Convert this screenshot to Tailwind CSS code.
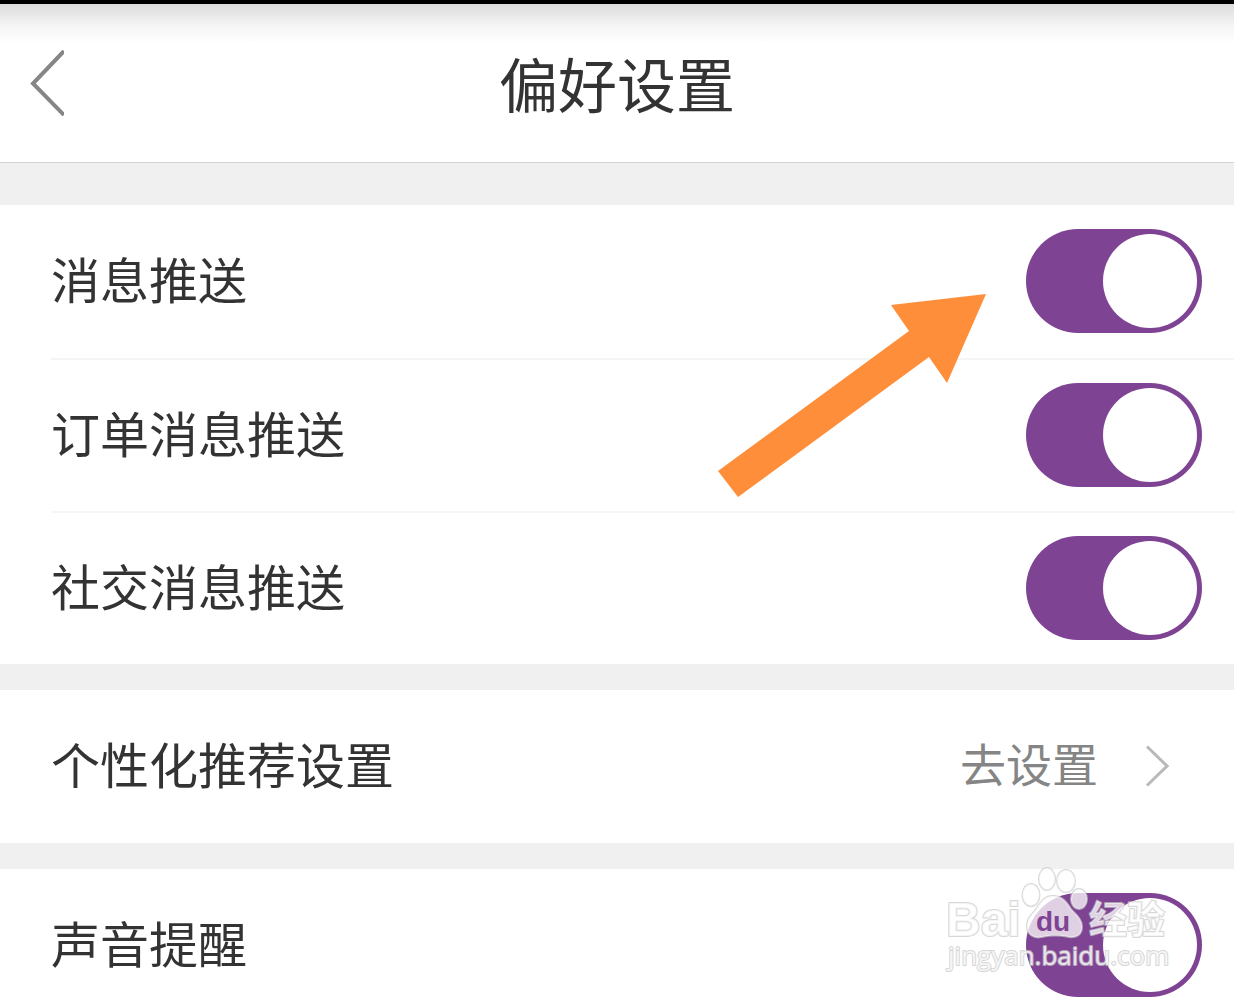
<!DOCTYPE html>
<html lang="zh-CN">

<head>
  <meta charset="UTF-8">
  <meta name="viewport" content="width=device-width, initial-scale=1.0">
  <title>偏好设置</title>
  <script src="https://cdn.jsdelivr.net/npm/@tailwindcss/browser@4"></script>
</head>

<body class="h-screen overflow-hidden bg-[#f0f0f0] text-[#333333] font-['Noto_Sans_CJK_SC',sans-serif]">

  <!-- Header -->
  <header class="border-t-4 border-t-black border-b border-b-[#d4d4d4] bg-white">
    <div class="grid grid-cols-[1fr_auto_1fr] items-center h-[158px] px-[30px] bg-linear-to-b from-[#dcdcdc] via-[#f5f5f5] via-[22px] to-white to-[40px]">
      <button type="button" aria-label="返回" class="justify-self-start">
        <svg class="block w-[34px] h-[66px]" viewBox="0 0 34 66" fill="none" stroke="#868686" stroke-width="4">
          <path d="M34 1L3 33.5L34 65" />
        </svg>
      </button>
      <h1 class="text-[59px] leading-[80px]">偏好设置</h1>
    </div>
  </header>

  <main class="mt-[42px] flex flex-col gap-[26px]">

    <!-- Push settings -->
    <section class="relative bg-white pl-[51px] text-[49px]">
      <div class="flex items-center justify-between h-[153px] pr-8 pb-0.5">
        <label for="push" class="pb-1.5">消息推送</label>
        <input id="push" type="checkbox" checked class="appearance-none flex items-center w-[176px] h-[104px] p-[5px] rounded-full bg-[#bbbbbb] checked:bg-[#7f4394] checked:justify-end before:block before:size-[94px] before:rounded-full before:bg-white">
      </div>
      <div class="flex items-center justify-between h-[153px] pr-8 pb-0.5 border-t-2 border-[#f5f5f5]">
        <label for="order-push" class="pb-1.5">订单消息推送</label>
        <input id="order-push" type="checkbox" checked class="appearance-none flex items-center w-[176px] h-[104px] p-[5px] rounded-full bg-[#bbbbbb] checked:bg-[#7f4394] checked:justify-end before:block before:size-[94px] before:rounded-full before:bg-white">
      </div>
      <div class="flex items-center justify-between h-[153px] pr-8 pb-0.5 border-t-2 border-[#f5f5f5]">
        <label for="social-push" class="pb-1.5">社交消息推送</label>
        <input id="social-push" type="checkbox" checked class="appearance-none flex items-center w-[176px] h-[104px] p-[5px] rounded-full bg-[#bbbbbb] checked:bg-[#7f4394] checked:justify-end before:block before:size-[94px] before:rounded-full before:bg-white">
      </div>

      <!-- Arrow pointing at the first switch -->
      <svg class="absolute top-[89px] right-[247px] w-[270px] h-[204px] pointer-events-none" viewBox="0 0 270 204" aria-hidden="true">
        <path fill="#ff8e3a" d="M269 0L230 89L212 63L21 203L1 177L192 37L174 11Z" />
      </svg>
    </section>

    <!-- Recommendations -->
    <section class="bg-white">
      <a href="#" class="flex items-center h-[153px] pl-[51px] pr-[65px] pb-0.5">
        <span class="pb-1.5 text-[49px]">个性化推荐设置</span>
        <span class="ml-auto pb-1.5 text-[46px] text-[#858585]">去设置</span>
        <svg class="ml-[47px] w-6 h-[42px]" viewBox="0 0 24 42" fill="none" stroke="#b9b9b9" stroke-width="3">
          <path d="M2 1.5L22 21L2 40.5" />
        </svg>
      </a>
    </section>

    <!-- Sound -->
    <section class="relative bg-white pl-[51px] text-[49px]">
      <div class="flex items-center justify-between h-[153px] pr-8 pb-0.5">
        <label for="sound" class="pb-1.5">声音提醒</label>
        <input id="sound" type="checkbox" checked class="appearance-none flex items-center w-[176px] h-[104px] p-[5px] rounded-full bg-[#bbbbbb] checked:bg-[#7f4394] checked:justify-end before:block before:size-[94px] before:rounded-full before:bg-white">
      </div>

      <!-- Watermark -->
      <svg class="absolute -top-[9px] right-[58px] w-[236px] h-[120px] pointer-events-none" viewBox="0 0 236 120" fill="#ffffff" fill-opacity="0.75" stroke="#c6c6c6" stroke-opacity="0.7" stroke-width="2" stroke-linejoin="round" paint-order="stroke">
        <text x="6" y="76" class="text-[48px] font-bold font-['Liberation_Sans',sans-serif]">Bai</text>
        <ellipse cx="91" cy="35" rx="8.5" ry="11" />
        <ellipse cx="107" cy="19" rx="8" ry="11" />
        <ellipse cx="126" cy="21" rx="9" ry="11" />
        <ellipse cx="139" cy="39" rx="8" ry="10" />
        <path d="M113 36C123 36 127 43 131 49C135 54 142 58 142 67C142 75 136 78 129 77C119 75 111 75 102 77C93 79 87 74 87 66C87 57 93 54 97 48C101 42 104 36 113 36Z" />
        <text x="96" y="71" fill="#7f4394" fill-opacity="1" stroke="none" class="text-[28px] font-bold font-['Liberation_Sans',sans-serif]">du</text>
        <text x="149" y="73" class="text-[38px] font-bold font-['Noto_Sans_CJK_SC',sans-serif]">经验</text>
        <text x="8" y="105" class="text-[26px] font-['Open_Sans',sans-serif]">jingyan.baidu.com</text>
      </svg>
    </section>

  </main>

</body>

</html>
